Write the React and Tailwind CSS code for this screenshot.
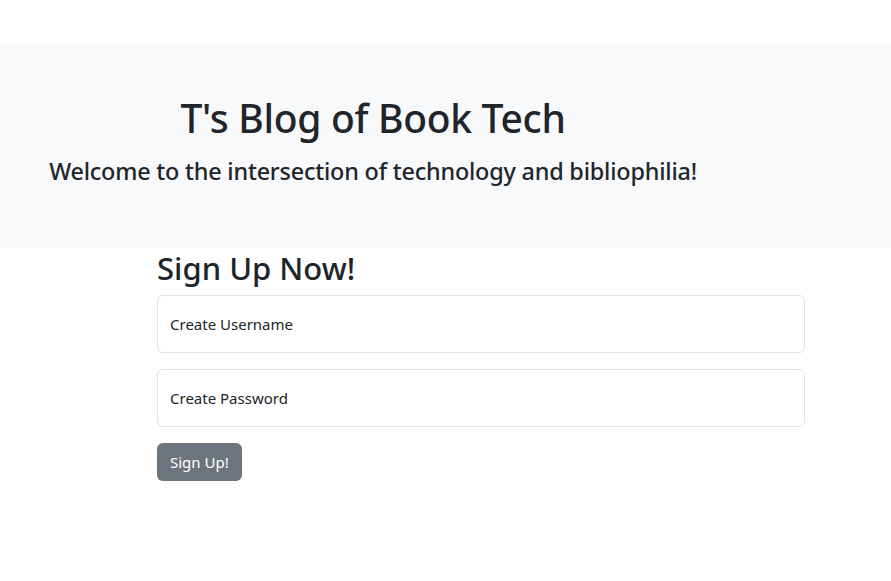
export default function App() {
  return (
    <div className="min-h-screen bg-white text-[#212529] font-['Noto_Sans',sans-serif]">
      <div className="pt-[44px]">
        <div className="bg-[#f8f9fa] h-[204px]">
          <div className="w-[746px] pt-[51px] flex flex-col items-center">
            <h1 className="text-[39px] leading-[1.2] font-medium tracking-[-0.3px]">T's Blog of Book Tech</h1>
            <h4 className="mt-[15px] text-[23.4px] leading-[1.2] font-medium tracking-[-0.2px]">Welcome to the intersection of technology and bibliophilia!</h4>
          </div>
        </div>
      </div>
      <div className="w-[648px] ml-[157px]">
        <h2 className="mt-[2px] text-[31px] leading-[1.2] font-medium">Sign Up Now!</h2>
        <div className="mt-[8px] h-[58px] border border-[#dee2e6] rounded-[6px] flex items-center px-[12px] text-[15px]">
          Create Username
        </div>
        <div className="mt-[16px] h-[58px] border border-[#dee2e6] rounded-[6px] flex items-center px-[12px] text-[15px]">
          Create Password
        </div>
        <button className="mt-[16px] h-[38px] px-[13px] rounded-[6px] bg-[#6c757d] text-white text-[15px]">Sign Up!</button>
      </div>
    </div>
  );
}
